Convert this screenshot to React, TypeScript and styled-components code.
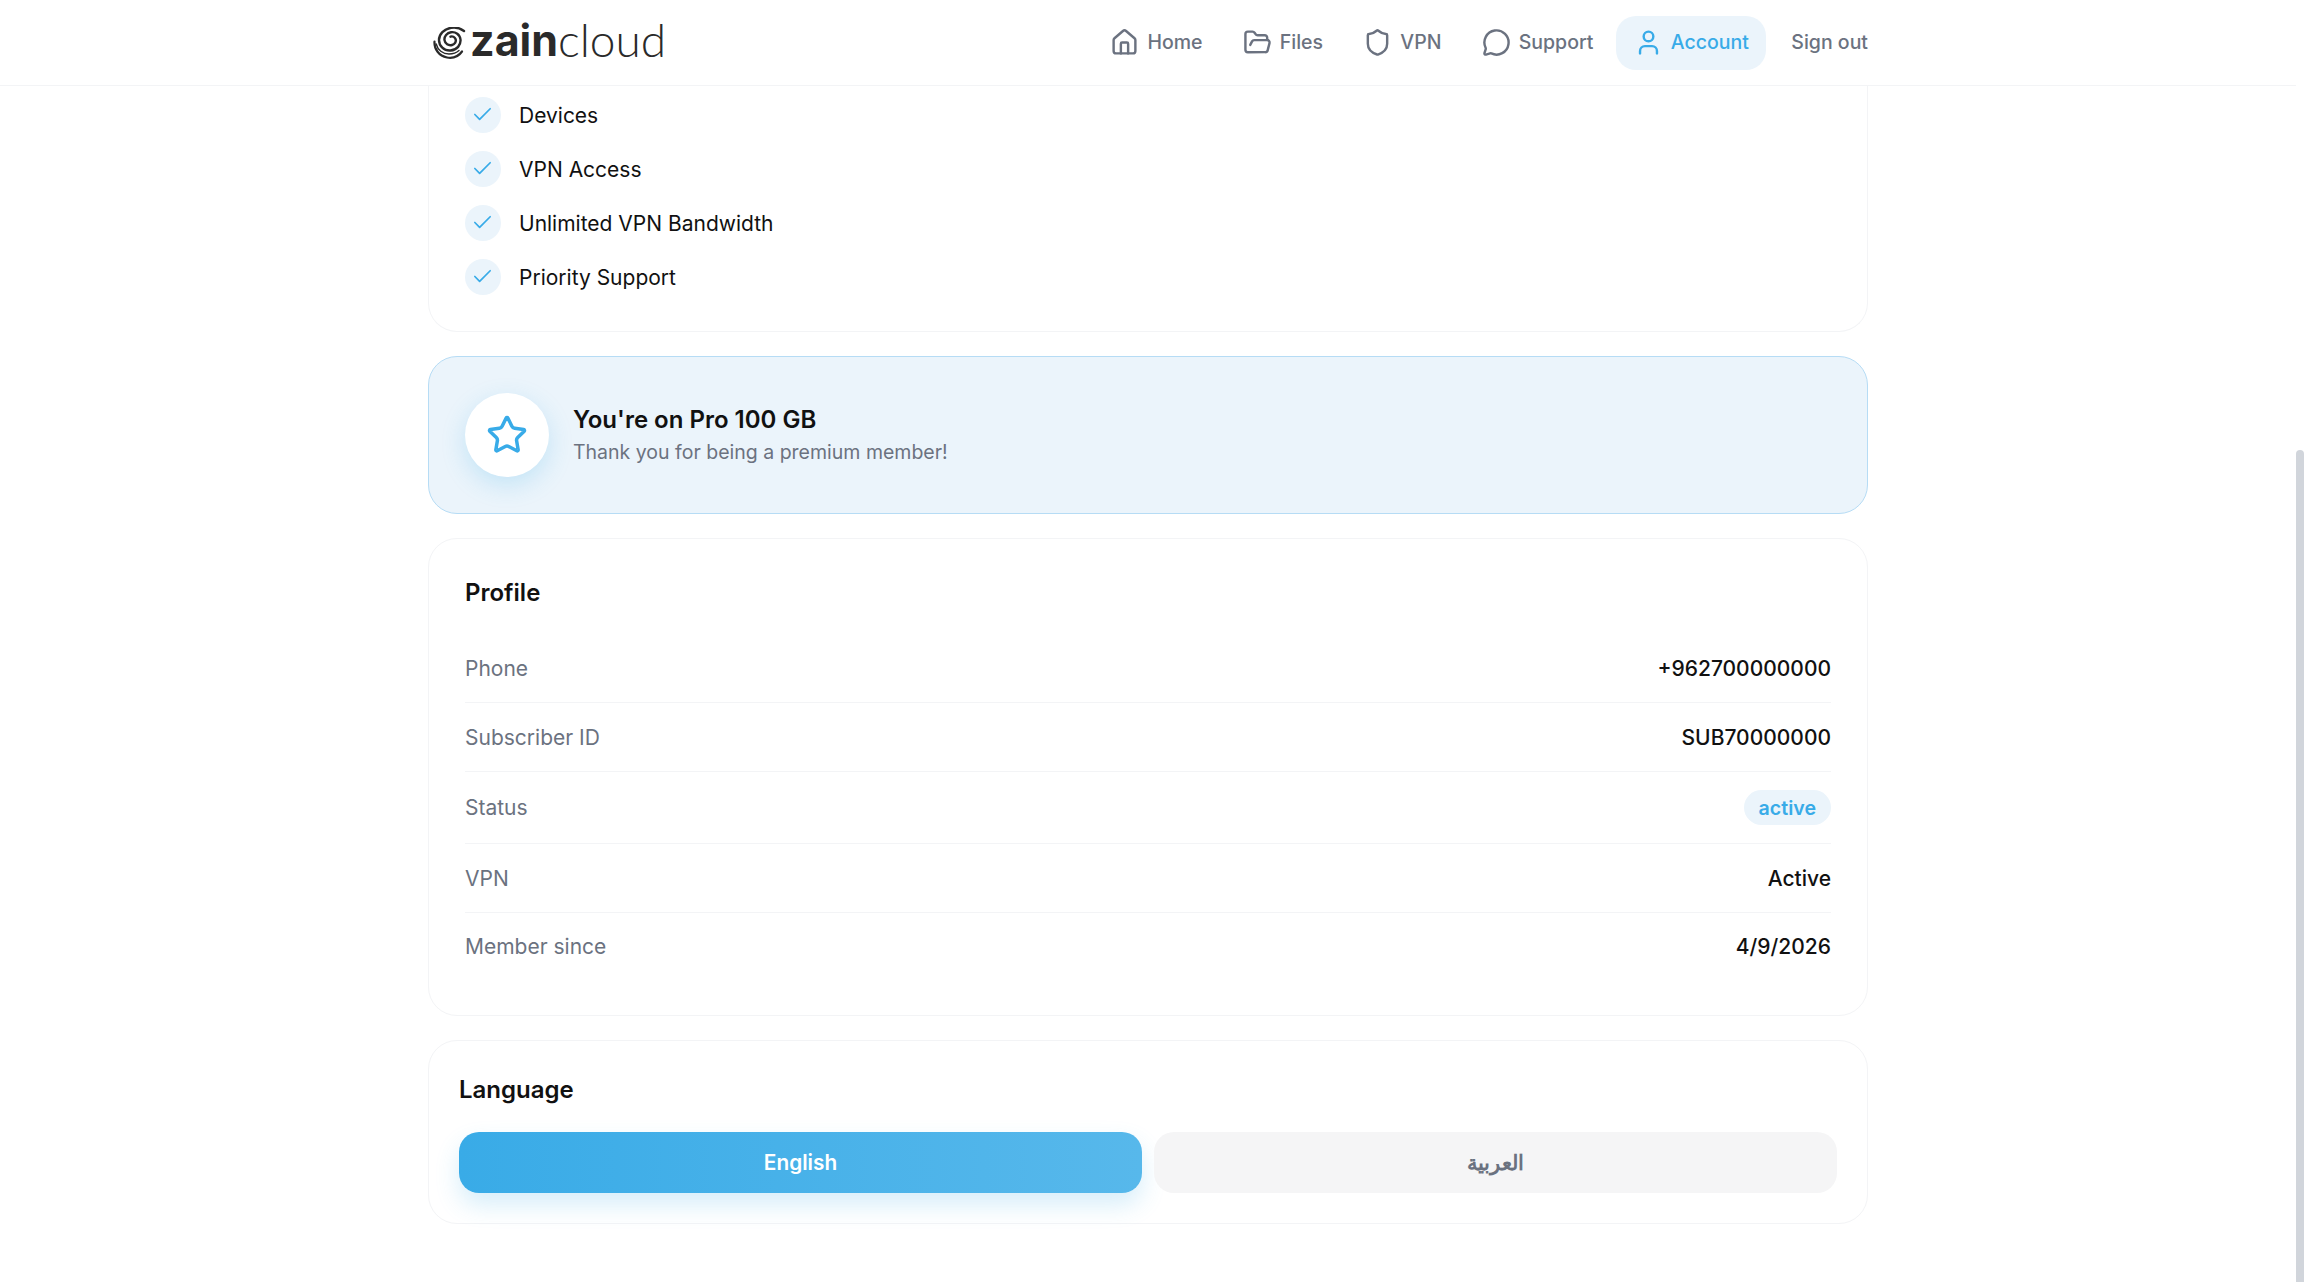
import React from 'react';
import styled, { createGlobalStyle } from 'styled-components';
import { Check, FolderOpen, House, MessageCircle, Shield, Star, User } from 'lucide-react';

const GlobalStyle = createGlobalStyle`
  html, body {
    margin: 0;
    padding: 0;
    background: #fff;
  }
  * {
    box-sizing: border-box;
  }
`;

const Logo = () => (
  <LogoWrap>
    <svg width="34" height="32" viewBox="0 0 34 32" fill="none" stroke="#2a2a2a" strokeLinecap="round">
      <path d="M31 4C27 1 22 0 18 .8 11 2 6 7 6 13c0 6 5 11 11.500 10.500C24 23 28 18 27.500 12.500 27 7.500 22.500 4.500 18 5.200c-4 .6-7 4-6.500 8 .5 3.500 4 5.800 7.500 4.800 3-.8 4.500-3.600 3.500-6-.8-2-3-3-5-2.300" strokeWidth="2.400" />
      <path d="M1.500 14.500C1 22 6 29 14 30.500c6 1 11.500-1 15-6" strokeWidth="2.200" />
      <path d="M3.200 17c1.500 6 6.500 10 12.800 10 4 0 7.500-1.200 10-3.500" strokeWidth="1.400" />
    </svg>
    <LogoBold>zain</LogoBold>
    <LogoLight>cloud</LogoLight>
  </LogoWrap>
);

const navItems = [
  { label: 'Home', icon: House },
  { label: 'Files', icon: FolderOpen },
  { label: 'VPN', icon: Shield },
  { label: 'Support', icon: MessageCircle },
  { label: 'Account', icon: User, active: true },
];

const features = ['Devices', 'VPN Access', 'Unlimited VPN Bandwidth', 'Priority Support'];

const App = () => {
  return (
    <Shell>
      <GlobalStyle />
      <Viewport>
        <Header>
          <HeaderInner>
            <Logo />
            <Nav>
              {navItems.map(({ label, icon: Icon, active }) => (
                <NavItem key={label} $active={active}>
                  <Icon size={29} strokeWidth={2} />
                  {label}
                </NavItem>
              ))}
              <SignOut>Sign out</SignOut>
            </Nav>
          </HeaderInner>
        </Header>
        <Main>
          <PlanCard>
            {features.map((f) => (
              <Feature key={f}>
                <CheckDot>
                  <Check size={23} strokeWidth={1.8} />
                </CheckDot>
                {f}
              </Feature>
            ))}
          </PlanCard>

          <Banner>
            <StarCircle>
              <Star size={42} strokeWidth={2} />
            </StarCircle>
            <div>
              <BannerTitle>You're on Pro 100 GB</BannerTitle>
              <BannerText>Thank you for being a premium member!</BannerText>
            </div>
          </Banner>

          <ProfileCard>
            <ProfileTitle>Profile</ProfileTitle>
            <Row>
              <Label>Phone</Label>
              <Value>+962700000000</Value>
            </Row>
            <Row>
              <Label>Subscriber ID</Label>
              <Value>SUB70000000</Value>
            </Row>
            <Row $tall>
              <Label>Status</Label>
              <Badge>active</Badge>
            </Row>
            <Row>
              <Label>VPN</Label>
              <Value>Active</Value>
            </Row>
            <Row>
              <Label>Member since</Label>
              <Value>4/9/2026</Value>
            </Row>
          </ProfileCard>

          <LanguageCard>
            <LanguageTitle>Language</LanguageTitle>
            <LangButtons>
              <LangButton $active>English</LangButton>
              <LangButton>العربية</LangButton>
            </LangButtons>
          </LanguageCard>
        </Main>
      </Viewport>
      <ScrollTrack>
        <ScrollThumb />
      </ScrollTrack>
    </Shell>
  );
};

export default App;

const Shell = styled.div`
  display: flex;
  height: 100vh;
  overflow: hidden;
  font-family: Inter, "Noto Sans", sans-serif;
  color: #111;
  background: #fff;
`;

const Viewport = styled.div`
  flex: 1;
  min-width: 0;
  display: flex;
  flex-direction: column;
`;

const ScrollTrack = styled.div`
  width: 8px;
  display: flex;
  padding-top: 450px;
  background: #fff;
`;

const ScrollThumb = styled.div`
  flex: 1;
  background: #d1d5db;
  border-radius: 5px 5px 0 0;
`;

const Header = styled.header`
  height: 86px;
  flex: none;
  background: #fff;
  border-bottom: 1px solid #f3f4f6;
`;

const HeaderInner = styled.div`
  width: 1440px;
  height: 100%;
  margin: 0 auto;
  display: flex;
  align-items: center;
  justify-content: space-between;
`;

const LogoWrap = styled.div`
  display: flex;
  align-items: center;
  padding-left: 5px;
  color: #2a2a2a;
  white-space: nowrap;
`;

const LogoBold = styled.span`
  margin-left: 3px;
  margin-top: -6px;
  font-family: Inter, sans-serif;
  font-size: 43px;
  font-weight: 700;
  line-height: 50px;
`;

const LogoLight = styled.span`
  margin-left: 0;
  margin-top: -6px;
  font-family: Lato, sans-serif;
  font-size: 46px;
  font-weight: 300;
  line-height: 50px;
`;

const Nav = styled.nav`
  display: flex;
  align-items: center;
  gap: 5.76px;
`;

const NavItem = styled.a<{ $active?: boolean }>`
  display: flex;
  align-items: center;
  gap: 8px;
  height: 54px;
  padding: 0 17.28px 1px;
  border-radius: 20px;
  font-size: 19.5px;
  font-weight: 500;
  color: ${({ $active }) => ($active ? '#38abe8' : '#6b7280')};
  background: ${({ $active }) => ($active ? '#ebf4fb' : 'transparent')};
`;

const SignOut = styled.a`
  padding: 0 0 1px 19.5px;
  font-size: 19.5px;
  font-weight: 500;
  color: #6b7280;
`;

const Main = styled.main`
  width: 1440px;
  margin: 0 auto;
  display: flex;
  flex-direction: column;
  gap: 24px;
`;

const PlanCard = styled.section`
  height: 246px;
  padding: 11px 36px 0;
  display: flex;
  flex-direction: column;
  gap: 18px;
  background: #fff;
  border: 1px solid #f3f4f6;
  border-top: 0;
  border-radius: 0 0 29px 29px;
`;

const Feature = styled.div`
  display: flex;
  align-items: center;
  gap: 18px;
  height: 36px;
  font-size: 21px;
`;

const CheckDot = styled.span`
  width: 36px;
  height: 36px;
  flex: none;
  display: flex;
  align-items: center;
  justify-content: center;
  padding: 0 1px 1px 0;
  border-radius: 50%;
  background: #ebf4fb;
  color: #38abe8;
`;

const Banner = styled.section`
  height: 158px;
  padding: 0 36px;
  display: flex;
  align-items: center;
  gap: 24px;
  background: #ebf4fb;
  border: 1px solid #b6dcf5;
  border-radius: 29px;
`;

const StarCircle = styled.div`
  width: 84px;
  height: 84px;
  flex: none;
  display: flex;
  align-items: center;
  justify-content: center;
  border-radius: 50%;
  background: #fff;
  color: #38abe8;
  box-shadow: 0 8px 24px rgba(56, 171, 232, 0.22);
`;

const BannerTitle = styled.div`
  font-size: 24px;
  font-weight: 600;
  line-height: 32px;
  color: #111;
`;

const BannerText = styled.div`
  padding-top: 1px;
  font-size: 19.5px;
  line-height: 30px;
  color: #6b7280;
`;

const ProfileCard = styled.section`
  height: 478px;
  padding: 36px 36px 0;
  background: #fff;
  border: 1px solid #f3f4f6;
  border-radius: 29px;
`;

const ProfileTitle = styled.h2`
  margin: 0 0 24px;
  font-size: 24px;
  font-weight: 600;
  line-height: 35px;
  color: #111;
`;

const Row = styled.div<{ $tall?: boolean }>`
  height: ${({ $tall }) => ($tall ? '72px' : '69px')};
  display: flex;
  align-items: center;
  justify-content: space-between;
  border-bottom: 1px solid #f3f4f6;

  &:last-child {
    height: 66px;
    border-bottom: 0;
  }
`;

const Label = styled.span`
  font-size: 21px;
  color: #6b7280;
`;

const Value = styled.span`
  font-size: 21px;
  font-weight: 500;
  color: #111;
`;

const Badge = styled.span`
  height: 35px;
  padding: 0 15px;
  display: flex;
  align-items: center;
  border-radius: 18px;
  background: #ebf4fb;
  color: #38abe8;
  font-size: 19.6px;
  font-weight: 600;
`;

const LanguageCard = styled.section`
  height: 184px;
  padding: 31px 30px 0;
  background: #fff;
  border: 1px solid #f3f4f6;
  border-radius: 29px;
`;

const LanguageTitle = styled.h2`
  margin: 0 0 25px;
  font-size: 24px;
  font-weight: 600;
  line-height: 35px;
  color: #111;
`;

const LangButtons = styled.div`
  display: grid;
  grid-template-columns: 1fr 1fr;
  gap: 12px;
`;

const LangButton = styled.button<{ $active?: boolean }>`
  height: 61px;
  border: 0;
  border-radius: 20px;
  font-family: Inter, "Noto Sans", sans-serif;
  font-size: 20.8px;
  font-weight: 600;
  color: ${({ $active }) => ($active ? '#fff' : '#6b7280')};
  background: ${({ $active }) => ($active ? 'linear-gradient(90deg, #39abe7, #57b8eb)' : '#f5f5f6')};
  box-shadow: ${({ $active }) => ($active ? '0 12px 24px rgba(56, 171, 232, 0.2)' : 'none')};
`;
